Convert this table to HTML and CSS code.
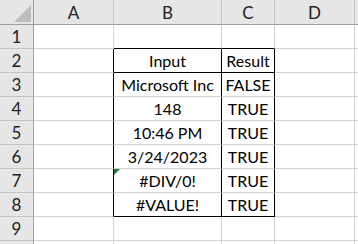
FILE: index.html
```html
<!DOCTYPE html>
<html lang="en">

<head>
    <meta charset="UTF-8">
    <title>Sheet1</title>
    <link rel="stylesheet" href="styles.css">
</head>

<body>
    <div class="sheet">
        <!-- column headers -->
        <div class="cell corner">
            <svg width="33" height="24" viewBox="0 0 33 24">
                <polygon points="31,5 31,22 14,22" fill="#bdbdbd" />
            </svg>
        </div>
        <div class="cell colhead">A</div>
        <div class="cell colhead">B</div>
        <div class="cell colhead">C</div>
        <div class="cell colhead">D</div>
        <div class="cell colhead last"></div>

        <!-- row 1 -->
        <div class="cell rowhead">1</div>
        <div class="cell"></div>
        <div class="cell edge-bottom"></div>
        <div class="cell edge-bottom"></div>
        <div class="cell"></div>
        <div class="cell last"></div>

        <!-- row 2 -->
        <div class="cell rowhead">2</div>
        <div class="cell edge-right"></div>
        <div class="cell center edge-right edge-bottom">Input</div>
        <div class="cell center edge-right edge-bottom">Result</div>
        <div class="cell"></div>
        <div class="cell last"></div>

        <!-- row 3 -->
        <div class="cell rowhead">3</div>
        <div class="cell edge-right"></div>
        <div class="cell center edge-right">Microsoft Inc</div>
        <div class="cell center edge-right">FALSE</div>
        <div class="cell"></div>
        <div class="cell last"></div>

        <!-- row 4 -->
        <div class="cell rowhead">4</div>
        <div class="cell edge-right"></div>
        <div class="cell center edge-right">148</div>
        <div class="cell center edge-right">TRUE</div>
        <div class="cell"></div>
        <div class="cell last"></div>

        <!-- row 5 -->
        <div class="cell rowhead">5</div>
        <div class="cell edge-right"></div>
        <div class="cell center edge-right">10:46 PM</div>
        <div class="cell center edge-right">TRUE</div>
        <div class="cell"></div>
        <div class="cell last"></div>

        <!-- row 6 -->
        <div class="cell rowhead">6</div>
        <div class="cell edge-right"></div>
        <div class="cell center edge-right">3/24/2023</div>
        <div class="cell center edge-right">TRUE</div>
        <div class="cell"></div>
        <div class="cell last"></div>

        <!-- row 7 -->
        <div class="cell rowhead">7</div>
        <div class="cell edge-right"></div>
        <div class="cell center edge-right flagged">#DIV/0!</div>
        <div class="cell center edge-right">TRUE</div>
        <div class="cell"></div>
        <div class="cell last"></div>

        <!-- row 8 -->
        <div class="cell rowhead">8</div>
        <div class="cell edge-right"></div>
        <div class="cell center edge-right edge-bottom">#VALUE!</div>
        <div class="cell center edge-right edge-bottom">TRUE</div>
        <div class="cell"></div>
        <div class="cell last"></div>

        <!-- row 9 -->
        <div class="cell rowhead">9</div>
        <div class="cell"></div>
        <div class="cell"></div>
        <div class="cell"></div>
        <div class="cell"></div>
        <div class="cell last"></div>

        <!-- row 10 (cut off) -->
        <div class="cell rowhead"></div>
        <div class="cell"></div>
        <div class="cell"></div>
        <div class="cell"></div>
        <div class="cell"></div>
        <div class="cell last"></div>
    </div>
</body>

</html>
```

FILE: styles.css
```css
* {
    box-sizing: border-box;
    margin: 0;
    padding: 0;
}

body {
    background-color: white;
    overflow: hidden;
    height: 244px;
    font-family: Lato, "Liberation Sans", sans-serif;
    font-size: 16px;
    color: black;
}

.sheet {
    display: grid;
    grid-template-columns: 34px 80px 108px 53px 80px 1fr;
    grid-template-rows: 25px repeat(10, 24px);
    width: 358px;
}

/* every cell draws its own right and bottom gridline */
.cell {
    display: flex;
    align-items: center;
    justify-content: center;
    border-right: 1px solid #d4d4d4;
    border-bottom: 1px solid #d4d4d4;
    white-space: nowrap;
    position: relative;
}

.cell.last {
    border-right: none;
}

.corner {
    background-color: #e6e6e6;
    border-right: 1px solid #9e9e9e;
    border-bottom: 1px solid #9e9e9e;
}

.corner svg {
    position: absolute;
    left: 0;
    top: 0;
}

.colhead {
    background-color: #e6e6e6;
    border-right: 1px solid #c4c4c4;
    border-bottom: 1px solid #9e9e9e;
    color: #222;
    font-size: 17px;
}

.rowhead {
    background-color: #e6e6e6;
    border-right: 1px solid #9e9e9e;
    border-bottom: 1px solid #c4c4c4;
    color: #222;
    font-size: 17px;
}

/* black box around B2:C8 */
.edge-right {
    border-right-color: black;
}

.edge-bottom {
    border-bottom-color: black;
}

/* error-check marker in the top-left corner */
.flagged::before {
    content: "";
    position: absolute;
    left: 0;
    top: 0;
    border-top: 6px solid #1e7b34;
    border-right: 6px solid transparent;
}
```
